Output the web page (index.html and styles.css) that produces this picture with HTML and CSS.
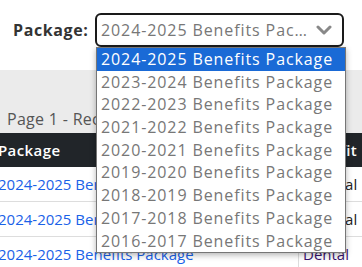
FILE: index.html
```html
<!DOCTYPE html>
<html>
<head>
<meta charset="utf-8">
<link rel="stylesheet" href="styles.css">
</head>
<body>
<div class="page">
  <div class="filter">
    <span class="label">Package:</span>
    <div class="select">
      <span class="select-text">2024-2025 Benefits Package</span>
      <svg class="chev" width="16" height="10" viewBox="0 0 16 10"><path d="M2 2 L8 8 L14 2" fill="none" stroke="#888" stroke-width="3" stroke-linecap="round" stroke-linejoin="round"/></svg>
    </div>
  </div>
  <div class="band">
    <div class="paging">Page 1 - Records 1 to 10 of 12</div>
  </div>
  <div class="table">
    <div class="row head"><div class="c1">Package</div><div class="c2">Benefit</div></div>
    <div class="row"><div class="c1 link">2024-2025 Benefits Package</div><div class="c2">Medical</div></div>
    <div class="row"><div class="c1 link">2024-2025 Benefits Package</div><div class="c2">Medical</div></div>
    <div class="row"><div class="c1 link">2024-2025 Benefits Package</div><div class="c2 visited">Dental</div></div>
  </div>
  <ul class="dropdown">
    <li class="sel">2024-2025 Benefits Package</li>
    <li>2023-2024 Benefits Package</li>
    <li>2022-2023 Benefits Package</li>
    <li>2021-2022 Benefits Package</li>
    <li>2020-2021 Benefits Package</li>
    <li>2019-2020 Benefits Package</li>
    <li>2018-2019 Benefits Package</li>
    <li>2017-2018 Benefits Package</li>
    <li>2016-2017 Benefits Package</li>
  </ul>
</div>
</body>
</html>
```
FILE: styles.css
```css
html, body {
  margin: 0;
  padding: 0;
  background: #fff;
  font-family: "Open Sans", "Noto Sans", sans-serif;
  overflow: hidden;
}
.page {
  position: relative;
  width: 362px;
  height: 267px;
  overflow: hidden;
}
.filter {
  height: 70px;
  display: flex;
  align-items: center;
  padding-left: 13px;
  box-sizing: border-box;
  padding-bottom: 10px;
}
.label {
  font-size: 16px;
  font-weight: 700;
  letter-spacing: 0.6px;
  color: #333;
  width: 82px;
}
.select {
  width: 249px;
  height: 34px;
  box-sizing: border-box;
  border: 2px solid #1a1a1a;
  border-radius: 6px;
  display: flex;
  align-items: center;
  padding: 0 10px 0 4px;
  gap: 6px;
}
.select-text {
  flex: 1;
  font-size: 16px;
  letter-spacing: 0.9px;
  color: #777;
  white-space: nowrap;
  overflow: hidden;
  text-overflow: ellipsis;
}
.band {
  background: #ebebeb;
  height: 63px;
  display: flex;
  align-items: flex-end;
  padding-left: 7px;
}
.paging {
  font-size: 16px;
  letter-spacing: 0.3px;
  color: #555;
  line-height: 22px;
  padding-bottom: 3px;
  white-space: nowrap;
}
.table {
  margin-left: -2px;
}
.row {
  display: grid;
  grid-template-columns: 300px 80px;
  height: 35px;
  border-bottom: 1px solid #ddd;
  box-sizing: border-box;
  align-items: center;
  font-size: 15px;
  white-space: nowrap;
}
.row.head {
  background: #212529;
  color: #fff;
  height: 34px;
  font-weight: 600;
  letter-spacing: 0.4px;
  border-bottom: none;
}
.c2 {
  height: 100%;
  display: flex;
  align-items: center;
  padding-left: 4px;
  border-left: 1px solid #ddd;
  box-sizing: border-box;
  color: #222;
}
.head .c2 {
  border-left: none;
  color: #fff;
}
.link {
  color: #1a62e8;
}
.visited {
  color: #3a1470;
}
.dropdown {
  position: absolute;
  left: 96px;
  top: 47px;
  width: 250px;
  margin: 0;
  padding: 0;
  list-style: none;
  background: #fff;
  border: 1px solid #767676;
  box-sizing: border-box;
  box-shadow: 0 2px 6px rgba(0,0,0,0.3);
}
.dropdown li {
  height: 22.7px;
  line-height: 22.7px;
  padding-left: 4px;
  font-size: 16px;
  letter-spacing: 0.9px;
  color: #777;
  white-space: nowrap;
}
.dropdown li.sel {
  background: #1a6ad6;
  color: #fff;
}
```
